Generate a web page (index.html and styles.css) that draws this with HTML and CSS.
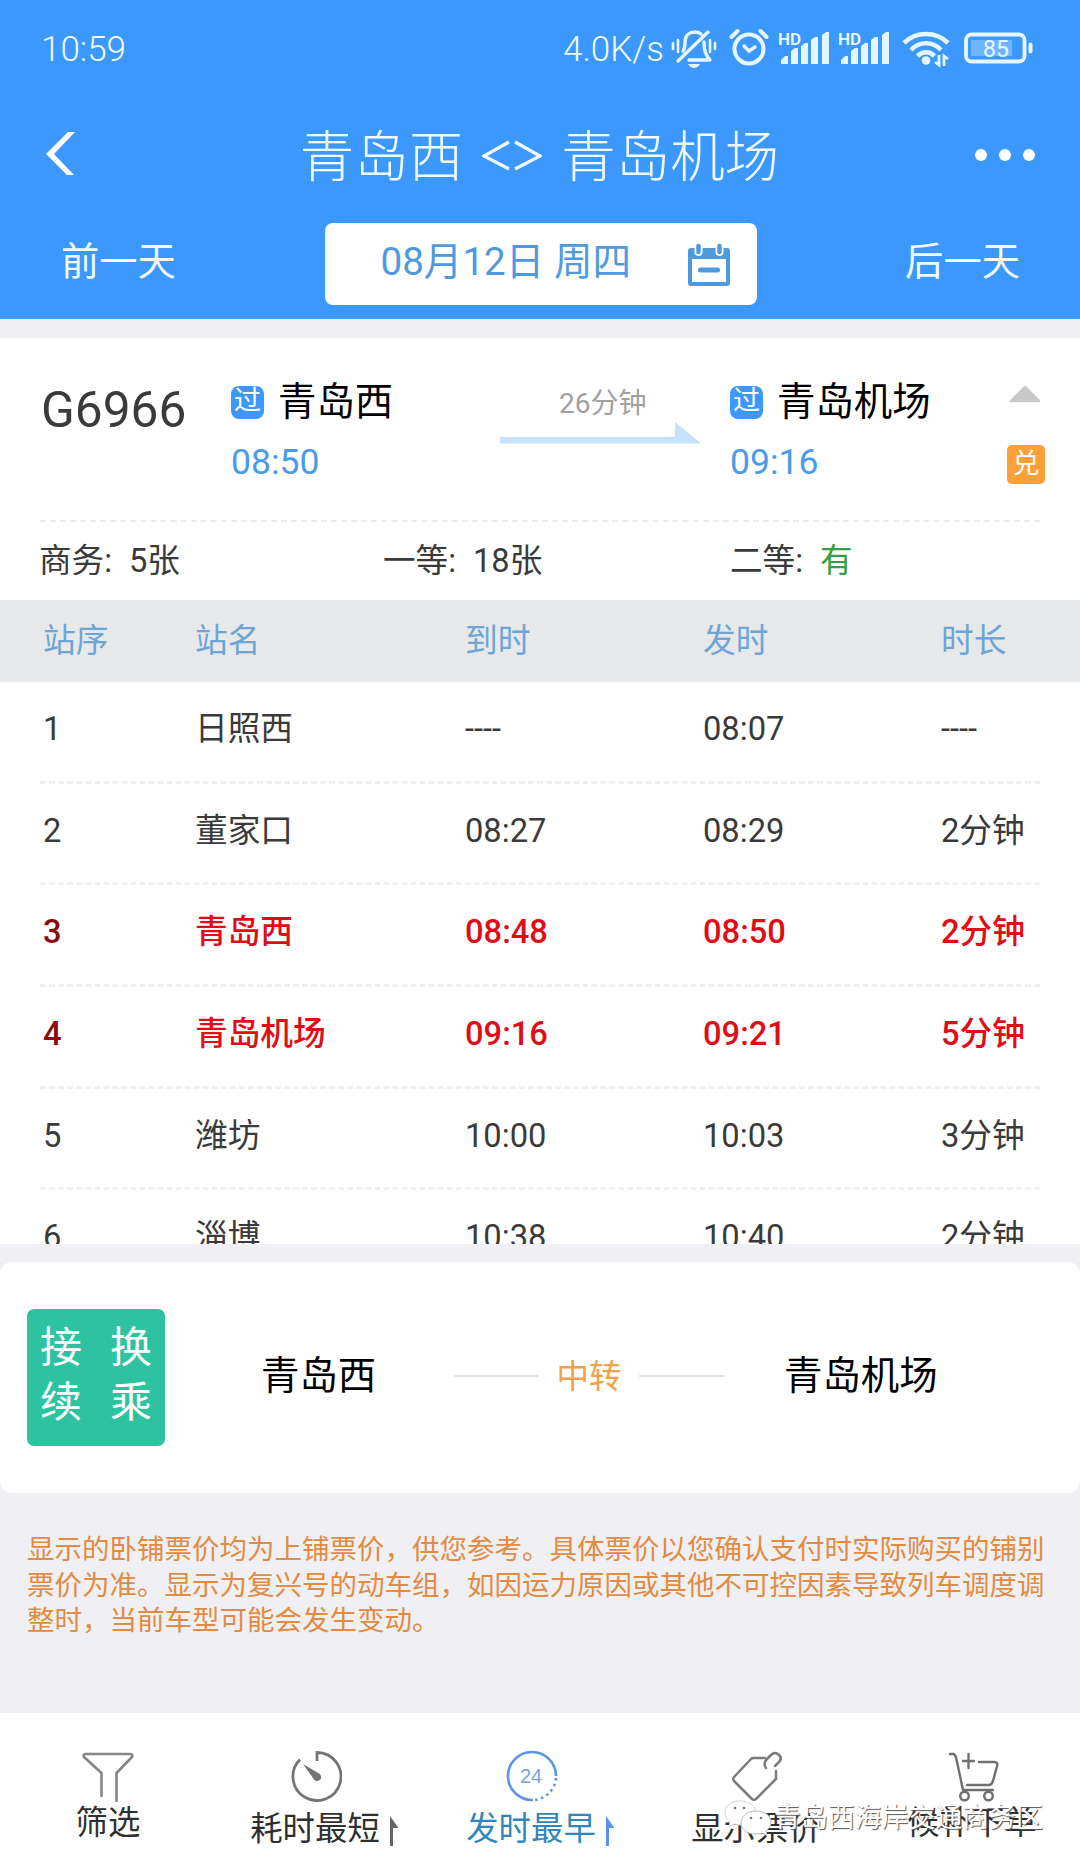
FILE: index.html
```html
<!DOCTYPE html>
<html lang="zh-CN">
<head>
  <meta charset="UTF-8">
  <meta name="viewport" content="width=device-width, initial-scale=1.0">
  <title>青岛西 - 青岛机场</title>
  <link rel="stylesheet" href="styles.css">
</head>
<body>
  <div class="page">
    <header class="header">
      <div class="status-bar">
        <span class="clock">10:59</span>
        <div class="status-icons">
          <span class="speed">4.0K/s</span>
          <svg class="icon-mute" width="46" height="40" viewBox="0 0 46 40" fill="none" stroke="#e4f7ff" stroke-width="3.4" stroke-linecap="round">
            <path d="M2 15v6M7 12v12M39 12v12M44 15v6" stroke-width="2.6"/>
            <path d="M12 23c2-3 2-5 2-9 0-7 5-10 10-10 3 0 5 1 6 2M37 4L7 33M33 14c0 8 1 12 6 18H18" stroke-linejoin="round"/>
            <path d="M17 36h12c-2 3-4 4-6 4s-4-1-6-4z" fill="#e4f7ff" stroke="none"/>
          </svg>
          <svg class="icon-alarm" width="40" height="40" viewBox="0 0 40 40" fill="none" stroke="#e4f7ff" stroke-width="4" stroke-linecap="round">
            <circle cx="20" cy="22" r="14.5"/>
            <path d="M2.500 10l6-6M37.500 10l-6-6"/>
            <path d="M15 19l5 5 6-4" stroke-width="3.400"/>
          </svg>
          <div class="signal">
            <span class="hd">HD</span>
            <svg width="50" height="34" viewBox="0 0 50 34" fill="#e4f7ff">
              <path d="M2 33v-4l4-4h3v8zM12 33V20l4-3h3v16zM22 33V15l4-3h3v21zM32 33V9l4-3h3v27zM43 33V4l4-3h3v32z"/>
            </svg>
          </div>
          <div class="signal">
            <span class="hd">HD</span>
            <svg width="50" height="34" viewBox="0 0 50 34" fill="#e4f7ff">
              <path d="M2 33v-4l4-4h3v8zM12 33V20l4-3h3v16zM22 33V15l4-3h3v21zM32 33V9l4-3h3v27zM43 33V4l4-3h3v32z"/>
            </svg>
          </div>
          <svg class="icon-wifi" width="48" height="38" viewBox="0 0 48 38" fill="none" stroke="#e4f7ff" stroke-width="4.600">
            <path d="M2 13c12-12 32-12 44 0M9 20c8-9 22-9 30 0M15.500 26c5-5 12-5 17 0"/>
            <circle cx="24" cy="30.500" r="4.300" fill="#e4f7ff" stroke="none"/>
            <path d="M37 25v10l-4-3M42 36V26l4 3" stroke-width="2.800"/>
          </svg>
          <svg class="icon-battery" width="69" height="32" viewBox="0 0 69 32">
            <rect x="2" y="2.500" width="58.500" height="27" rx="5.500" fill="none" stroke="#e4f7ff" stroke-width="3.800"/>
            <rect x="7" y="8" width="41" height="16" fill="#71b5ff"/>
            <rect x="64.500" y="10.500" width="4" height="11" rx="2" fill="#e4f7ff"/>
            <text class="battery-text" x="32" y="24.500" text-anchor="middle">85</text>
          </svg>
        </div>
      </div>
      <div class="nav">
        <svg class="back" width="32" height="46" viewBox="0 0 32 46"><path d="M23 1h7L9 23l20 21h-7L1 23z" fill="#fff"/></svg>
        <h1 class="title"><span>青岛西</span><svg width="60" height="32" viewBox="0 0 60 32" fill="none" stroke="#f0fbff" stroke-width="3.200"><path d="M27 2L2 16l25 13M33 2l25 14-25 13"/></svg><span>青岛机场</span></h1>
        <div class="more"><i></i><i></i><i></i></div>
      </div>
      <div class="date-bar">
        <span class="day">前一天</span>
        <div class="date-box">
          <span>08月12日 周四</span>
          <svg width="42" height="44" viewBox="0 0 42 44">
            <path d="M3 5h36a3 3 0 0 1 3 3v32a3 3 0 0 1-3 3H3a3 3 0 0 1-3-3V8a3 3 0 0 1 3-3zM4 16v23h34V16z" fill="#4f9ade" fill-rule="evenodd"/>
            <path d="M10.500 3v6M31.500 3v6" stroke="#fff" stroke-width="8" stroke-linecap="round"/>
            <path d="M10.500 3v6M31.500 3v6" stroke="#4f9ade" stroke-width="4.500" stroke-linecap="round"/>
            <path d="M12.500 27h17" stroke="#4f9ade" stroke-width="5" stroke-linecap="round"/>
          </svg>
        </div>
        <span class="day">后一天</span>
      </div>
    </header>

    <section class="train">
      <div class="train-info">
        <div class="train-no">G6966</div>
        <div class="stop">
          <div class="stop-name"><span class="pass">过</span><span class="name">青岛西</span></div>
          <div class="stop-time">08:50</div>
        </div>
        <div class="duration">
          <span>26分钟</span>
          <svg width="202" height="22" viewBox="0 0 202 22"><path d="M0 15h175V0l26 21.500H0z" fill="#c7e0fb"/></svg>
        </div>
        <div class="stop">
          <div class="stop-name"><span class="pass">过</span><span class="name">青岛机场</span></div>
          <div class="stop-time">09:16</div>
        </div>
        <div class="train-side">
          <svg width="32" height="18" viewBox="0 0 32 18"><path d="M16 2L30 16H2z" fill="#c8c8c8" stroke="#c8c8c8" stroke-width="2.500" stroke-linejoin="round"/></svg>
          <span class="exchange">兑</span>
        </div>
      </div>
      <div class="seats">
        <div>商务:<span>5张</span></div>
        <div>一等:<span>18张</span></div>
        <div>二等:<span class="has">有</span></div>
      </div>
      <div class="stations">
        <div class="row head"><span>站序</span><span>站名</span><span>到时</span><span>发时</span><span>时长</span></div>
        <div class="row"><span>1</span><span>日照西</span><span>----</span><span>08:07</span><span>----</span></div>
        <div class="row"><span>2</span><span>董家口</span><span>08:27</span><span>08:29</span><span>2分钟</span></div>
        <div class="row active"><span>3</span><span>青岛西</span><span>08:48</span><span>08:50</span><span>2分钟</span></div>
        <div class="row active"><span>4</span><span>青岛机场</span><span>09:16</span><span>09:21</span><span>5分钟</span></div>
        <div class="row"><span>5</span><span>潍坊</span><span>10:00</span><span>10:03</span><span>3分钟</span></div>
        <div class="row"><span>6</span><span>淄博</span><span>10:38</span><span>10:40</span><span>2分钟</span></div>
      </div>
    </section>

    <section class="transfer">
      <div class="transfer-tag"><span>接</span><span>换</span><span>续</span><span>乘</span></div>
      <span class="from">青岛西</span>
      <div class="via"><i></i><span>中转</span><i></i></div>
      <span class="to">青岛机场</span>
    </section>

    <p class="notice">显示的卧铺票价均为上铺票价，供您参考。具体票价以您确认支付时实际购买的铺别票价为准。显示为复兴号的动车组，如因运力原因或其他不可控因素导致列车调度调整时，当前车型可能会发生变动。</p>

    <footer class="tabs">
      <div class="tab short">
        <svg width="52" height="52" viewBox="0 0 52 52" fill="none" stroke="#858585" stroke-width="2.600" stroke-linecap="round" stroke-linejoin="round"><path d="M19.500 46V23L2 7c-1-2 0-3 2-3h44c2 0 3 1 2 3L34.500 23v28"/></svg>
        <span>筛选</span>
      </div>
      <div class="tab sort">
        <svg width="52" height="52" viewBox="0 0 52 52" fill="none" stroke="#747474" stroke-width="2.800">
          <path d="M27 11V2.500a24 24 0 1 1-17 7"/>
          <path d="M13 14l16 9.500a4 4 0 1 1-5 6z" fill="#747474" stroke="none"/>
        </svg>
        <span>耗时最短<svg class="flag" width="9" height="30" viewBox="0 0 9 30"><path d="M0 0l8.500 12H3v18H0z" fill="#666"/></svg></span>
      </div>
      <div class="tab sort on">
        <svg width="52" height="52" viewBox="0 0 52 52" fill="none" stroke="#5b94e6" stroke-width="2.600">
          <path d="M27 50A24 24 0 1 1 50 26"/>
          <path d="M50 28A24 24 0 0 1 28 50" stroke-dasharray="2.500 3.500"/>
          <text class="num24" x="25" y="33" text-anchor="middle">24</text>
        </svg>
        <span>发时最早<svg class="flag" width="9" height="30" viewBox="0 0 9 30"><path d="M0 0l8.500 12H3v18H0z" fill="#5b94e6"/></svg></span>
      </div>
      <div class="tab">
        <svg width="52" height="52" viewBox="0 0 52 52" fill="none" stroke="#7b7b7b" stroke-width="2.500" stroke-linecap="round">
          <path d="M35 8H24c-1 0-2 0-3 1L4 27c-1 1-1 3 0 4l18 18c1 1 3 1 4 0l20-20v-8"/>
          <path d="M36 18c-3-4-1-7 1-9l4-4c3-3 6-2 8 0s3 4 0 7l-4 4"/>
        </svg>
        <span>显示票价</span>
      </div>
      <div class="tab short cart">
        <svg width="52" height="52" viewBox="0 0 52 52" fill="none" stroke="#707070" stroke-width="2.400" stroke-linecap="round" stroke-linejoin="round">
          <path d="M2 4h4l2 3 7 33h30M31 12h15c3 0 4 2 3 4l-4 15c-1 3-2 4-4 4H19M15 11h11M20.500 4v14"/>
          <circle cx="16.500" cy="46" r="4.300"/><circle cx="40.500" cy="46" r="4.300"/>
        </svg>
        <span>候补下单</span>
      </div>
      <div class="watermark">
        <svg width="50" height="36" viewBox="0 0 50 36">
          <path d="M16 1C7 1 1 6 1 13c0 4 2 7 5 9l-1 5 5-3c3 1 6 1 9 1 8-1 13-6 13-12 0-7-7-12-16-12z" fill="#fff" stroke="#d4d4d4"/>
          <path d="M32 11c-9 0-15 5-15 12s7 11 14 11c3 0 5 0 7-1l5 2-1-4c3-2 5-5 5-9 0-6-6-11-15-11z" fill="#fff" stroke="#bbb"/>
          <g fill="#777"><circle cx="11" cy="8" r="1.300"/><circle cx="20" cy="8" r="1.300"/><circle cx="27" cy="18" r="1.300"/><circle cx="37" cy="18" r="1.300"/></g>
        </svg>
        <span>青岛西海岸交通商务区</span>
      </div>
    </footer>
  </div>
</body>
</html>
```
FILE: styles.css
```css
* {
  box-sizing: border-box;
}
body {
  margin: 0;
  background: #efeff4;
  font-family: Roboto, "Noto Sans CJK SC", sans-serif;
  color: #3a3a3a;
}
svg {
  display: block;
  flex: none;
}
.page {
  width: 1080px;
  height: 1866px;
  overflow: hidden;
}

/* header */
.header {
  height: 319px;
  background: #3c98fc;
  color: #f0fbff;
}
.status-bar {
  height: 98px;
  padding: 0 47px 0 41px;
  display: flex;
  justify-content: space-between;
  font-size: 35px;
  font-weight: 350;
  line-height: 100px;
}
.status-icons {
  display: flex;
  align-items: flex-start;
}
.speed {
  width: 108px;
}
.icon-mute {
  margin-top: 28px;
}
.icon-alarm {
  margin: 27px 0 0 12px;
}
.signal {
  position: relative;
  margin: 31px 0 0 10px;
}
.hd {
  position: absolute;
  left: -1px;
  top: 0;
  font-size: 17px;
  font-weight: 600;
  line-height: 16px;
}
.icon-wifi {
  margin: 30px 0 0 13px;
}
.icon-battery {
  margin: 32px 0 0 14px;
}
.battery-text {
  font-size: 23px;
  font-weight: 400;
  fill: #e4f7ff;
}
.nav {
  height: 114px;
  padding: 0 45px;
  display: flex;
  align-items: center;
  justify-content: space-between;
}
.back {
  margin-top: -2px;
}
.title {
  margin: 4px 0 0 27px;
  display: flex;
  align-items: center;
  gap: 19px;
  font-size: 54.5px;
  font-weight: 300;
  line-height: 80px;
}
.title svg {
  margin-top: -2px;
}
.more {
  display: flex;
  gap: 12px;
}
.more i {
  width: 12px;
  height: 12px;
  border-radius: 50%;
  background: #fff;
}
.date-bar {
  padding: 11px 60px 0 61px;
  display: flex;
  align-items: center;
  justify-content: space-between;
  font-size: 38.3px;
}
.day {
  margin-bottom: 12px;
}
.date-box {
  width: 432px;
  height: 82px;
  padding: 0 27px 4px 56px;
  display: flex;
  align-items: center;
  justify-content: space-between;
  border-radius: 8px;
  background: #fff;
  color: #4f9ade;
}
.date-box span {
  margin-bottom: 9px;
  font-size: 38.6px;
}
.date-box svg {
  margin-top: 6px;
}

/* train */
.train {
  margin-top: 19px;
  height: 906px;
  overflow: hidden;
  background: #fff;
}
.train-info {
  height: 184px;
  margin: 0 40px;
  padding-top: 40px;
  display: grid;
  grid-template-columns: 191px 269px 230px 259px 1fr;
  border-bottom: 2px dashed #ececec;
}
.train-no {
  padding-left: 1px;
  font-size: 49.6px;
  line-height: 64px;
}
.stop-name {
  display: flex;
  align-items: center;
  gap: 14px;
  height: 48px;
  font-size: 38.4px;
  color: #000;
}
.name {
  margin-bottom: 8px;
}
.pass {
  width: 33px;
  height: 33px;
  border-radius: 8px;
  background: #3c98fc;
  color: #fff;
  font-size: 27px;
  line-height: 31px;
  text-align: center;
}
.stop-time {
  font-size: 35.5px;
  line-height: 72px;
  color: #4a9aeb;
}
.duration span {
  display: block;
  height: 44px;
  padding-left: 59px;
  font-size: 28px;
  line-height: 52px;
  color: #a0a0a0;
}
.train-side {
  width: 38px;
  margin-left: 18px;
}
.train-side svg {
  margin: 7px 0 0 2px;
}
.exchange {
  display: block;
  width: 38px;
  height: 39px;
  margin-top: 42px;
  border-radius: 5px;
  background: #ff9f38;
  color: #fff;
  font-size: 27px;
  line-height: 39px;
  text-align: center;
}
.seats {
  height: 78px;
  padding-left: 39px;
  display: grid;
  grid-template-columns: 344px 347px 1fr;
  font-size: 32.6px;
  line-height: 79px;
}
.seats span {
  margin-left: 17px;
}
.seats .has {
  color: #33a043;
}
.row {
  height: 101.7px;
  margin: 0 40px;
  padding-left: 3px;
  display: grid;
  grid-template-columns: 152px 270px 238px 238px 1fr;
  border-bottom: 3px dashed #f0f0f0;
  font-size: 32.7px;
  line-height: 95px;
}
.row.head {
  height: 82px;
  margin: 0;
  padding-left: 43px;
  border: 0;
  background: #e7e8ea;
  color: #6ca5d6;
  line-height: 83px;
}
.row.active {
  color: #e00d16;
  font-weight: 500;
}
.row.active span:first-child {
  color: #8c0a0e;
}

/* transfer */
.transfer {
  height: 231px;
  margin-top: 18px;
  padding-left: 27px;
  display: flex;
  align-items: center;
  border-radius: 12px;
  background: #fff;
  color: #000;
  font-size: 38.4px;
}
.transfer-tag {
  width: 138px;
  height: 137px;
  padding: 11px 13px 0;
  display: grid;
  grid-template-columns: 1fr auto;
  grid-auto-rows: 55px;
  border-radius: 7px;
  background: #2ec3a0;
  color: #fff;
  font-size: 42px;
  line-height: 55px;
}
.from {
  width: 193px;
  margin: 0 0 11px 96px;
}
.via {
  width: 270px;
  margin-bottom: 3px;
  display: flex;
  align-items: center;
  justify-content: space-between;
  font-size: 32.5px;
  color: #f3a04a;
}
.via span {
  margin-bottom: 5px;
}
.via i {
  width: 85px;
  height: 2px;
  background: #e0e0e0;
}
.to {
  margin: 0 0 11px 60px;
}

.notice {
  height: 220px;
  margin: 0;
  padding: 39px 33px 0 27px;
  font-size: 27.5px;
  line-height: 35.7px;
  color: #e28b43;
}

/* bottom tabs */
.tabs {
  position: relative;
  height: 153px;
  padding-top: 37px;
  display: grid;
  grid-template-columns: repeat(5, 216px);
  background: #fff;
  color: #2f2f2f;
}
.tab {
  display: flex;
  flex-direction: column;
  align-items: center;
  font-size: 32.4px;
  line-height: 54px;
}
.tab.short {
  line-height: 42px;
}
.tab.sort {
  padding-right: 17px;
}
.tab.cart > svg {
  margin-left: 4px;
}
.tab > span {
  display: flex;
  align-items: center;
}
.tab.on {
  color: #2f86bd;
}
.flag {
  margin: 4px -18px 0 10px;
}
.num24 {
  font-family: "Liberation Sans", sans-serif;
  font-size: 20px;
  fill: #7aa3e0;
  stroke: none;
}
.watermark {
  position: absolute;
  left: 724px;
  top: 87px;
  display: flex;
  align-items: center;
  color: #fff;
  font-size: 26.9px;
  line-height: 36px;
  text-shadow: 1px 1px 1px #555;
}
```
